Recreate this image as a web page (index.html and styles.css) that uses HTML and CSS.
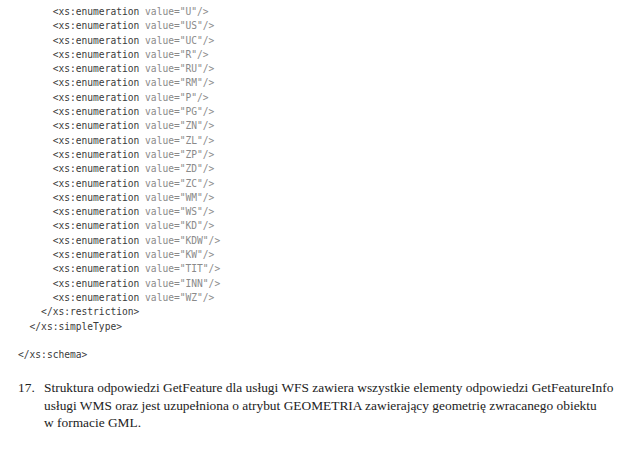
FILE: index.html
```html
<!DOCTYPE html>
<html lang="pl">
<head>
<meta charset="utf-8">
<link rel="stylesheet" href="styles.css">
</head>
<body>
<pre class="code"><span class="t">      &lt;xs:enumeration</span> <span class="a">value="U"/&gt;</span>
<span class="t">      &lt;xs:enumeration</span> <span class="a">value="US"/&gt;</span>
<span class="t">      &lt;xs:enumeration</span> <span class="a">value="UC"/&gt;</span>
<span class="t">      &lt;xs:enumeration</span> <span class="a">value="R"/&gt;</span>
<span class="t">      &lt;xs:enumeration</span> <span class="a">value="RU"/&gt;</span>
<span class="t">      &lt;xs:enumeration</span> <span class="a">value="RM"/&gt;</span>
<span class="t">      &lt;xs:enumeration</span> <span class="a">value="P"/&gt;</span>
<span class="t">      &lt;xs:enumeration</span> <span class="a">value="PG"/&gt;</span>
<span class="t">      &lt;xs:enumeration</span> <span class="a">value="ZN"/&gt;</span>
<span class="t">      &lt;xs:enumeration</span> <span class="a">value="ZL"/&gt;</span>
<span class="t">      &lt;xs:enumeration</span> <span class="a">value="ZP"/&gt;</span>
<span class="t">      &lt;xs:enumeration</span> <span class="a">value="ZD"/&gt;</span>
<span class="t">      &lt;xs:enumeration</span> <span class="a">value="ZC"/&gt;</span>
<span class="t">      &lt;xs:enumeration</span> <span class="a">value="WM"/&gt;</span>
<span class="t">      &lt;xs:enumeration</span> <span class="a">value="WS"/&gt;</span>
<span class="t">      &lt;xs:enumeration</span> <span class="a">value="KD"/&gt;</span>
<span class="t">      &lt;xs:enumeration</span> <span class="a">value="KDW"/&gt;</span>
<span class="t">      &lt;xs:enumeration</span> <span class="a">value="KW"/&gt;</span>
<span class="t">      &lt;xs:enumeration</span> <span class="a">value="TIT"/&gt;</span>
<span class="t">      &lt;xs:enumeration</span> <span class="a">value="INN"/&gt;</span>
<span class="t">      &lt;xs:enumeration</span> <span class="a">value="WZ"/&gt;</span>
<span class="t">    &lt;/xs:restriction&gt;</span>
<span class="t">  &lt;/xs:simpleType&gt;</span>

<span class="t">&lt;/xs:schema&gt;</span></pre>
<div class="item">
  <div class="num">17.</div>
  <p class="text">Struktura odpowiedzi GetFeature dla usługi WFS zawiera wszystkie elementy odpowiedzi GetFeatureInfo<br>usługi WMS oraz jest uzupełniona o atrybut GEOMETRIA zawierający geometrię zwracanego obiektu<br>w formacie GML.</p>
</div>
</body>
</html>
```
FILE: styles.css
```css
html, body {
  margin: 0;
  padding: 0;
  background: #ffffff;
}
.code {
  margin: 0;
  padding: 5px 0 0 18px;
  font-family: "DejaVu Sans Mono", monospace;
  font-size: 9.6px;
  line-height: 14.3px;
  color: #333;
}
.t { color: #3a3a3a; }
.a { color: #8a8a8a; }
.item {
  display: flex;
  margin-top: 17px;
  padding-left: 18px;
  font-family: "Liberation Serif", serif;
  font-size: 13.4px;
  line-height: 17.5px;
  color: #222;
}
.num {
  width: 26px;
  flex: none;
}
.text {
  margin: 0;
  width: 590px;
  white-space: nowrap;
}
```
